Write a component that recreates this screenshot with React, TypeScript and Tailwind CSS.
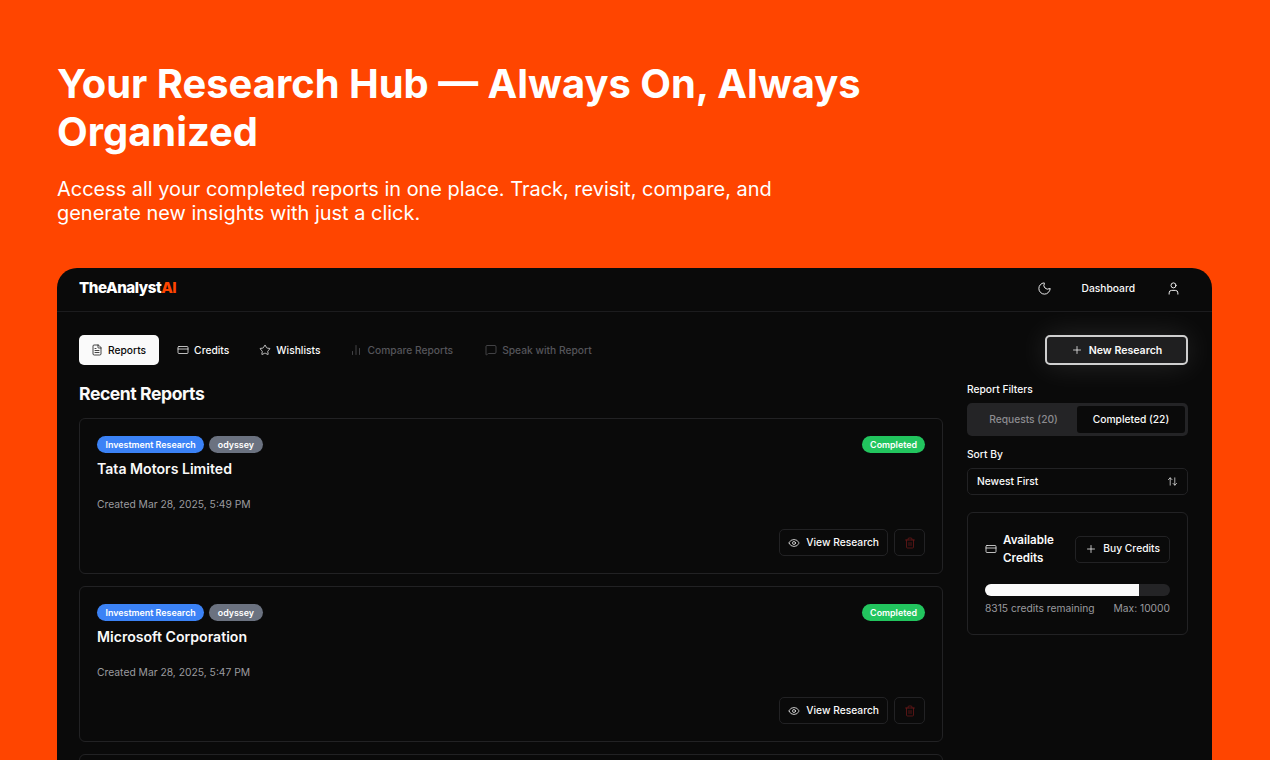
import { Moon, User, FileText, CreditCard, Star, BarChart2, MessageSquare, Plus, ArrowUpDown, Eye, Trash2 } from "lucide-react";

function Tab({ icon, label, active, muted, last }: { icon: React.ReactNode; label: string; active?: boolean; muted?: boolean; last?: boolean }) {
  return (
    <div className={`flex h-[30px] items-center gap-[5px] rounded-[5px] pl-[12px] text-[10.25px] font-medium ${active ? "bg-[#fafafa] pr-[13px] text-[#0a0a0a]" : muted ? "pr-[12px] text-[#55555a]" : "pr-[12px] text-[#fafafa]"} ${last ? "ml-[2px]" : ""}`}>
      {icon}
      <span className="pt-[1px]">{label}</span>
    </div>
  );
}

function Card({ title, created }: { title: string; created: string }) {
  return (
    <div className="flex h-[156px] shrink-0 flex-col rounded-[6px] border border-[#222224] px-[17px] pt-[17px]">
      <div className="flex items-start justify-between">
        <div>
          <div className="flex gap-[5px]">
            <span className="flex h-[17px] items-center rounded-full bg-[#3b82f6] px-[8.5px] text-[8.9px] font-semibold text-white">Investment Research</span>
            <span className="flex h-[17px] items-center rounded-full bg-[#6b7280] px-[8.5px] text-[8.9px] font-semibold text-white">odyssey</span>
          </div>
          <div className="mt-[5px] text-[14.1px] leading-[22px] font-semibold text-[#fafafa]">{title}</div>
        </div>
        <span className="flex h-[17px] items-center rounded-full bg-[#22c55e] px-[8px] text-[8.9px] font-semibold text-white">Completed</span>
      </div>
      <div className="mt-[17px] text-[10.3px] leading-[14px] text-[#9a9a9f]">{created}</div>
      <div className="mt-[18px] flex justify-end gap-[6px]">
        <div className="flex h-[27px] items-center gap-[6px] rounded-[5px] border border-[#222224] px-[8px] text-[10.25px] font-medium text-[#fafafa]">
          <Eye size={12} strokeWidth={1.5} />
          <span>View Research</span>
        </div>
        <div className="flex h-[27px] w-[31px] items-center justify-center rounded-[5px] border border-[#222224] text-[#6f1a1a]">
          <Trash2 size={12} strokeWidth={1.5} />
        </div>
      </div>
    </div>
  );
}

export default function App() {
  return (
    <div className="h-[760px] w-full overflow-hidden bg-[#ff4500] font-['Inter',sans-serif]">
      <div className="px-[57px] pt-[60px]">
        <h1 className="max-w-[840px] text-[39.9px] leading-[48px] font-bold text-white">Your Research Hub — Always On, Always Organized</h1>
        <p className="mt-[21px] max-w-[760px] text-[19.95px] leading-[24px] text-white">Access all your completed reports in one place. Track, revisit, compare, and generate new insights with just a click.</p>
      </div>
      <div className="relative mt-[43px] mr-[58px] ml-[57px] h-[492px] overflow-hidden rounded-t-[20px] bg-[#0a0a0a]">
        <div className="flex h-[44px] items-center justify-between border-b border-[#1c1c1e] px-[22px] pb-[2px]">
          <div className="text-[15.2px] font-extrabold tracking-[-0.5px] text-white">TheAnalyst<span className="text-[#ff4500]">AI</span></div>
          <div className="flex items-center text-[#fafafa]">
            <Moon size={15} strokeWidth={1.5} />
            <span className="ml-[30px] text-[10.25px] font-medium">Dashboard</span>
            <User size={15} strokeWidth={1.5} className="mr-[9px] ml-[31px]" />
          </div>
        </div>
        <div className="pt-[23px] pr-[24px] pl-[22px]">
          <div className="flex items-center justify-between">
            <div className="flex gap-[6px]">
              <Tab active label="Reports" icon={<FileText size={12} strokeWidth={1.5} />} />
              <Tab label="Credits" icon={<CreditCard size={12} strokeWidth={1.5} />} />
              <Tab label="Wishlists" icon={<Star size={12} strokeWidth={1.5} />} />
              <Tab muted label="Compare Reports" icon={<BarChart2 size={12} strokeWidth={1.5} />} />
              <Tab muted last label="Speak with Report" icon={<MessageSquare size={12} strokeWidth={1.5} />} />
            </div>
            <div className="flex h-[30px] w-[143px] items-center justify-center gap-[6px] rounded-[5px] border-2 border-[#cfcfcf] bg-[#1f1f20] text-[10.6px] font-semibold text-[#fafafa] shadow-[0_0_30px_rgba(255,255,255,0.12)]">
              <Plus size={12} strokeWidth={1.5} />
              <span className="pt-[1px]">New Research</span>
            </div>
          </div>
          <div className="mt-[15px] flex gap-[24px]">
            <div className="flex w-[864px] shrink-0 flex-col">
              <h2 className="text-[17.6px] leading-[28px] font-bold tracking-[-0.45px] text-[#fafafa]">Recent Reports</h2>
              <div className="mt-[10px] flex flex-col gap-[12px]">
                <Card title="Tata Motors Limited" created="Created Mar 28, 2025, 5:49 PM" />
                <Card title="Microsoft Corporation" created="Created Mar 28, 2025, 5:47 PM" />
                <div className="h-[156px] shrink-0 rounded-[6px] border border-[#222224]" />
              </div>
            </div>
            <div className="w-[221px] shrink-0">
              <div className="mt-[2px] text-[10.25px] leading-[14px] font-medium text-[#fafafa]">Report Filters</div>
              <div className="mt-[7px] flex h-[33px] items-center rounded-[5px] bg-[#242426] p-[3px] text-[10.25px] font-medium">
                <div className="flex-1 text-center text-[#8c8c90]">Requests (20)</div>
                <div className="flex h-[27px] w-[108px] items-center justify-center rounded-[3px] bg-[#0a0a0a] text-[#fafafa]">Completed (22)</div>
              </div>
              <div className="mt-[11px] text-[10.25px] leading-[14px] font-medium text-[#fafafa]">Sort By</div>
              <div className="mt-[7px] flex h-[27px] items-center justify-between rounded-[5px] border border-[#222224] px-[9px] text-[10.25px] font-medium text-[#fafafa]">
                <span>Newest First</span>
                <ArrowUpDown size={11} strokeWidth={1.5} />
              </div>
              <div className="mt-[17px] h-[123px] rounded-[6px] border border-[#222224] px-[17px] pt-[18px]">
                <div className="flex items-center justify-between">
                  <div className="flex items-center gap-[6px]">
                    <CreditCard size={12} strokeWidth={1.5} className="text-[#fafafa]" />
                    <div className="w-[60px] text-[11.6px] leading-[18px] font-semibold text-[#fafafa]">Available Credits</div>
                  </div>
                  <div className="flex h-[27px] items-center gap-[6px] rounded-[5px] border border-[#222224] px-[9px] text-[10.25px] font-medium text-[#fafafa]">
                    <Plus size={12} strokeWidth={1.5} />
                    <span>Buy Credits</span>
                  </div>
                </div>
                <div className="mt-[17px] h-[12px] overflow-hidden rounded-full bg-[#242426]">
                  <div className="h-full bg-[#fafafa]" style={{ width: "83.15%" }} />
                </div>
                <div className="mt-[5px] flex justify-between text-[10.25px] leading-[14px] text-[#9a9a9f]">
                  <span>8315 credits remaining</span>
                  <span>Max: 10000</span>
                </div>
              </div>
            </div>
          </div>
        </div>
      </div>
    </div>
  );
}
